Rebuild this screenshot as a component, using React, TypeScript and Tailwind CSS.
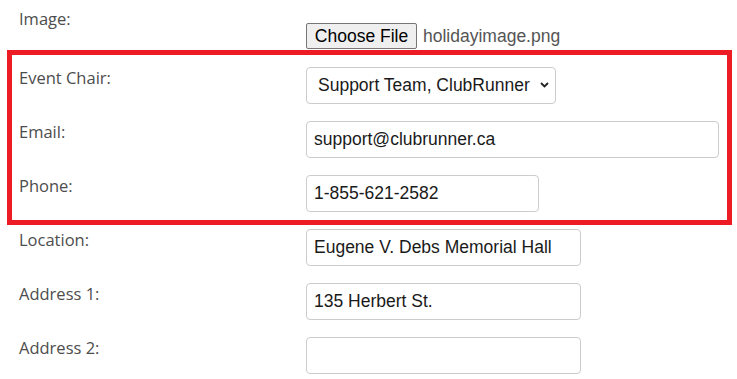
import React from 'react';

const labelCls = "w-[287px] shrink-0 text-[16.5px] leading-[22px] text-[#4d4d4d] font-['Open_Sans',sans-serif]";
const inputCls =
  "h-[37px] rounded-[4px] border border-[#cccccc] bg-white px-[7px] text-[17.5px] text-[#1a1a1a] font-['Liberation_Sans',Arial,sans-serif] outline-none";

const FieldRow = ({ label, children, className = '' }: { label: string; children: React.ReactNode; className?: string }) => (
  <div className={`flex items-start ${className}`}>
    <div className={labelCls}>{label}</div>
    {children}
  </div>
);

const App = () => {
  return (
    <div className="w-[737px] h-[379px] overflow-hidden bg-white pt-[8px] pl-[7px]">
      {/* Image */}
      <div className="flex items-start pl-[12px] h-[42px]">
        <div className={labelCls}>Image:</div>
        <div className="mt-[15px] flex items-center gap-[6px] font-['Liberation_Sans',Arial,sans-serif] text-[17.5px]">
          <span className="h-[26px] w-[111px] rounded-[2px] border border-[#767676] bg-[#efefef] text-black leading-[24px] text-center">
            Choose File
          </span>
          <span className="text-[#555555]">holidayimage.png</span>
        </div>
      </div>

      {/* Highlighted contact fields */}
      <div className="w-[725px] border-[5px] border-[#ed1c24] pt-[12px] pb-[8px] pl-[7px] flex flex-col gap-[17px]">
        <FieldRow label="Event Chair:">
          <div className="relative">
            <select
              defaultValue="support"
              className={`${inputCls} h-[36px] w-[250px] appearance-none pl-[11px] pr-[4px]`}
            >
              <option value="support">Support Team, ClubRunner</option>
            </select>
            <svg
              className="pointer-events-none absolute right-[7px] top-[15px]"
              width="9"
              height="6"
              viewBox="0 0 9 6"
              fill="none"
            >
              <path d="M1 1l3.5 3.5L8 1" stroke="#222" strokeWidth="1.8" />
            </svg>
          </div>
        </FieldRow>
        <FieldRow label="Email:">
          <input className={`${inputCls} w-[413px]`} defaultValue="support@clubrunner.ca" />
        </FieldRow>
        <FieldRow label="Phone:">
          <input className={`${inputCls} w-[233px]`} defaultValue="1-855-621-2582" />
        </FieldRow>
      </div>

      {/* Location */}
      <div className="mt-[4px] pl-[12px] flex flex-col gap-[17px]">
        <FieldRow label="Location:">
          <input className={`${inputCls} w-[275px]`} defaultValue="Eugene V. Debs Memorial Hall" />
        </FieldRow>
        <FieldRow label="Address 1:">
          <input className={`${inputCls} w-[275px]`} defaultValue="135 Herbert St." />
        </FieldRow>
        <FieldRow label="Address 2:">
          <input className={`${inputCls} w-[275px]`} defaultValue="" />
        </FieldRow>
      </div>
    </div>
  );
};

export default App;
